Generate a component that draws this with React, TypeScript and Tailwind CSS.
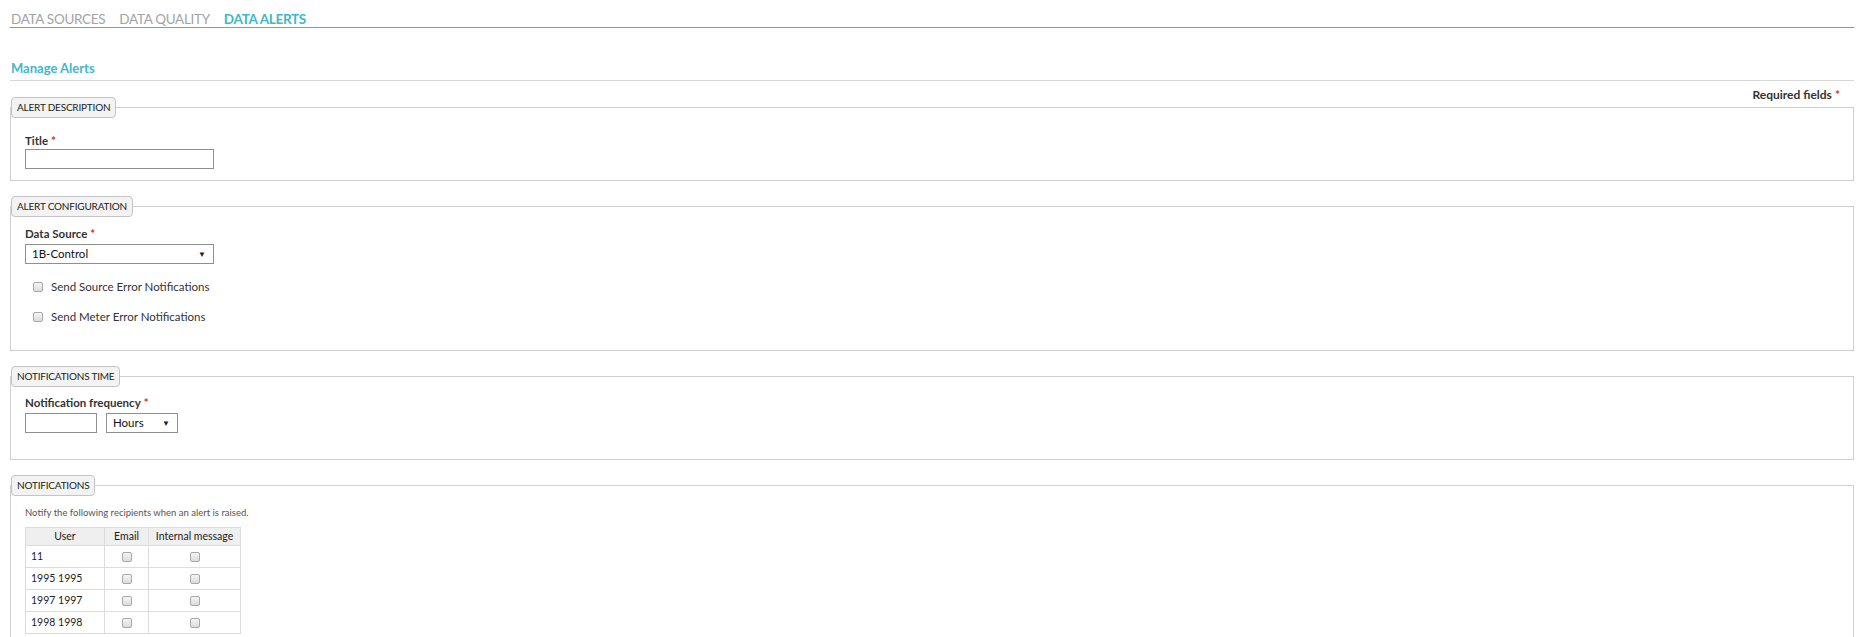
import React from "react";

const font = { fontFamily: "Lato, 'Open Sans', sans-serif" };

function Star() {
  return <span className="text-[#e8261f] ml-[3px]">*</span>;
}

function Box() {
  return (
    <span className="inline-block w-[10px] h-[10px] rounded-[2px] border border-[#a9a9a9] bg-gradient-to-b from-[#f4f4f4] to-[#dcdcdc]" />
  );
}

function Section({ title, children, className = "" }: { title: string; children: React.ReactNode; className?: string }) {
  return (
    <fieldset className={"border border-[#d0d0d0] mb-[15px] px-[14px] " + className}>
      <legend className="-ml-[14px] h-[21px] px-[5px] flex items-center border border-[#c4c4c4] rounded-[4px] bg-[#f3f3f3] text-[10px] text-[#222] tracking-[-0.2px]">
        {title}
      </legend>
      {children}
    </fieldset>
  );
}

function Select({ value, width }: { value: string; width: string }) {
  return (
    <div className={"h-[20px] border border-[#8f8f8f] bg-white flex items-center justify-between pl-[6px] pr-[7px] text-[11.5px] text-[#111] " + width}>
      <span>{value}</span>
      <span className="text-[8px] text-[#222]">▼</span>
    </div>
  );
}

function Check({ label }: { label: string }) {
  return (
    <div className="flex items-center h-[14px] pl-[8px] gap-[8px] text-[11.5px] text-[#333]">
      <Box />
      <span>{label}</span>
    </div>
  );
}

const users = ["11", "1995 1995", "1997 1997", "1998 1998"];

export default function App() {
  return (
    <div className="bg-white min-h-screen pl-[10px] pr-[4px] overflow-hidden" style={font}>
      <div className="flex gap-[14px] pt-[9px] h-[28px] border-b border-[#3fb8c9] pl-[1px] text-[13.5px] tracking-[-0.3px]">
        <span className="text-[#a3a3a3]">DATA SOURCES</span>
        <span className="text-[#a3a3a3]">DATA QUALITY</span>
        <span className="text-[#3fb8c9] font-bold">DATA ALERTS</span>
      </div>

      <div className="mt-[33px] h-[20px] border-b border-[#d6d6d6] pl-[1px] text-[13px] font-bold text-[#3fb8c9] leading-[14px]">
        Manage Alerts
      </div>

      <div className="text-right pr-[14px] text-[12px] font-bold text-[#333] leading-[12px] mt-[8px] -mb-[4px] relative z-10">
        Required fields<Star />
      </div>

      <Section title="ALERT DESCRIPTION" className="pb-[11px]">
        <div className="pt-[16px] text-[11.5px] font-bold text-[#333] leading-[14px]">
          Title<Star />
        </div>
        <div className="mt-[1px] w-[189px] h-[20px] border border-[#8f8f8f] bg-white" />
      </Section>

      <Section title="ALERT CONFIGURATION" className="pb-[26px]">
        <div className="pt-[10px] text-[11.5px] font-bold text-[#333] leading-[14px]">
          Data Source<Star />
        </div>
        <div className="mt-[3px]">
          <Select value="1B-Control" width="w-[189px]" />
        </div>
        <div className="mt-[16px] flex flex-col gap-[16px]">
          <Check label="Send Source Error Notifications" />
          <Check label="Send Meter Error Notifications" />
        </div>
      </Section>

      <Section title="NOTIFICATIONS TIME" className="pb-[26px]">
        <div className="pt-[9px] text-[11.5px] font-bold text-[#333] leading-[14px]">
          Notification frequency<Star />
        </div>
        <div className="mt-[3px] flex gap-[9px]">
          <div className="w-[72px] h-[20px] border border-[#8f8f8f] bg-white" />
          <Select value="Hours" width="w-[72px]" />
        </div>
      </Section>

      <Section title="NOTIFICATIONS" className="pb-[20px]">
        <div className="pt-[11px] text-[9.5px] text-[#555] leading-[12px]">
          Notify the following recipients when an alert is raised.
        </div>
        <table className="mt-[8px] border-collapse text-[10.5px] text-[#222]">
          <thead>
            <tr className="bg-[#efefef] h-[18px]">
              <th className="font-normal border border-[#dcdcdc] w-[79px]">User</th>
              <th className="font-normal border border-[#dcdcdc] w-[44px]">Email</th>
              <th className="font-normal border border-[#dcdcdc] w-[92px]">Internal message</th>
            </tr>
          </thead>
          <tbody>
            {users.map((u) => (
              <tr key={u} className="h-[22px]">
                <td className="border border-[#dcdcdc] pl-[5px]">{u}</td>
                <td className="border border-[#dcdcdc] text-center">
                  <span className="inline-flex align-middle"><Box /></span>
                </td>
                <td className="border border-[#dcdcdc] text-center">
                  <span className="inline-flex align-middle"><Box /></span>
                </td>
              </tr>
            ))}
          </tbody>
        </table>
      </Section>
    </div>
  );
}
